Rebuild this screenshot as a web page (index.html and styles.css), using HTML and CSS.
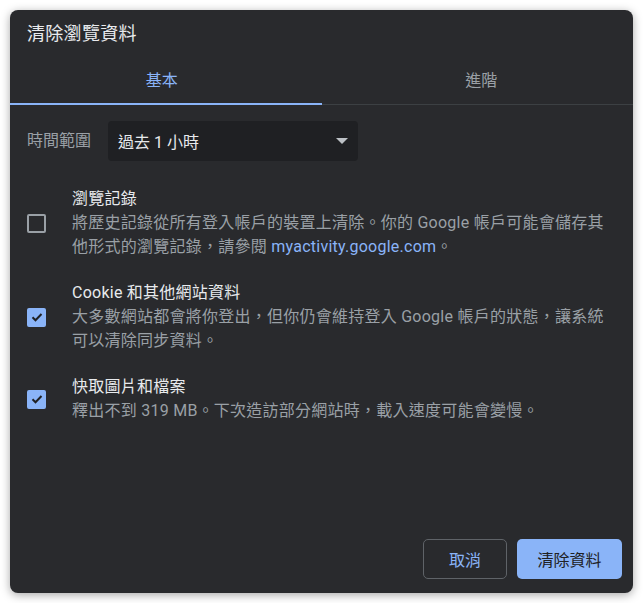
FILE: index.html
```html
<!DOCTYPE html>
<html lang="zh-Hant">
<head>
<meta charset="utf-8">
<title>清除瀏覽資料</title>
<link rel="stylesheet" href="styles.css">
</head>
<body>
<div class="dialog">
  <div class="title">清除瀏覽資料</div>
  <div class="tabs">
    <div class="tab active">基本</div>
    <div class="tab">進階</div>
  </div>
  <div class="content">
    <div class="range-row">
      <span class="range-label">時間範圍</span>
      <div class="select">
        <span>過去 1 小時</span>
        <svg class="arrow" width="12" height="6" viewBox="0 0 12 6"><path d="M0 0h12L6 6z" fill="#bdc1c6"/></svg>
      </div>
    </div>
    <div class="items">
      <div class="item">
        <div class="box-col"><span class="checkbox"></span></div>
        <div class="text">
          <div class="item-title">瀏覽記錄</div>
          <div class="item-desc">將歷史記錄從所有登入帳戶的裝置上清除。你的 Google 帳戶可能會儲存其他形式的瀏覽記錄，請參閱 <span class="link">myactivity.google.com</span>。</div>
        </div>
      </div>
      <div class="item">
        <div class="box-col"><span class="checkbox checked"><svg width="14" height="14" viewBox="0 0 14 14"><path d="M2.5 7.2l3 3 6-6.2" fill="none" stroke="#202124" stroke-width="2"/></svg></span></div>
        <div class="text">
          <div class="item-title">Cookie 和其他網站資料</div>
          <div class="item-desc">大多數網站都會將你登出，但你仍會維持登入 Google 帳戶的狀態，讓系統可以清除同步資料。</div>
        </div>
      </div>
      <div class="item">
        <div class="box-col"><span class="checkbox checked"><svg width="14" height="14" viewBox="0 0 14 14"><path d="M2.5 7.2l3 3 6-6.2" fill="none" stroke="#202124" stroke-width="2"/></svg></span></div>
        <div class="text">
          <div class="item-title">快取圖片和檔案</div>
          <div class="item-desc">釋出不到 319 MB。下次造訪部分網站時，載入速度可能會變慢。</div>
        </div>
      </div>
    </div>
  </div>
  <div class="actions">
    <button class="btn cancel">取消</button>
    <button class="btn primary">清除資料</button>
  </div>
</div>
</body>
</html>
```

FILE: styles.css
```css
* { box-sizing: border-box; }
html, body { margin: 0; background: #ffffff; }
body {
  padding: 10px;
  font-family: Roboto, "Noto Sans CJK TC", sans-serif;
  font-size: 16px;
}
.dialog {
  width: 623px;
  height: 583px;
  background: #292a2d;
  border-radius: 8px;
  box-shadow: 0 2px 10px rgba(0,0,0,0.35);
  display: flex;
  flex-direction: column;
  color: #e8eaed;
}
.title {
  padding: 12px 17px 10px;
  font-size: 18px;
  line-height: 24px;
  letter-spacing: 0.3px;
  color: #e8eaed;
}
.tabs {
  display: flex;
  box-shadow: inset 0 -1px 0 #3c4043;
}
.tab {
  flex: 1;
  height: 49px;
  display: flex;
  align-items: center;
  justify-content: center;
  padding-bottom: 2px;
  color: #9aa0a6;
  font-size: 16px;
  border-bottom: 2px solid transparent;
}
.tab.active {
  color: #8ab4f8;
  border-bottom-color: #8ab4f8;
  padding-right: 8px;
}
.tab + .tab { padding-left: 8px; }
.content {
  padding: 16px 17px 0;
}
.range-row {
  display: flex;
  align-items: center;
  gap: 17px;
}
.range-label {
  color: #9aa0a6;
  line-height: 24px;
}
.select {
  width: 250px;
  height: 40px;
  background: #1f2023;
  border-radius: 4px;
  display: flex;
  align-items: center;
  justify-content: space-between;
  padding: 0 10px 0 10px;
  color: #e8eaed;
}
.items {
  margin-top: 26px;
  display: flex;
  flex-direction: column;
  gap: 22px;
}
.item {
  display: flex;
  align-items: center;
}
.box-col {
  width: 45px;
  flex: none;
  display: flex;
  align-items: center;
}
.checkbox {
  width: 19px;
  height: 19px;
  border: 2px solid #9aa0a6;
  border-radius: 2px;
  display: flex;
  align-items: center;
  justify-content: center;
}
.checkbox.checked {
  background: #8ab4f8;
  border-color: #8ab4f8;
}
.text {
  line-height: 24px;
  max-width: 536px;
  letter-spacing: 0.25px;
}
.item-title {
  color: #e8eaed;
}
.item-desc {
  color: #9aa0a6;
}
.link { color: #8ab4f8; }
.actions {
  margin-top: auto;
  display: flex;
  justify-content: flex-end;
  gap: 10px;
  padding: 0 11px 14px 0;
}
.btn {
  height: 40px;
  border-radius: 5px;
  font-family: Roboto, "Noto Sans CJK TC", sans-serif;
  font-size: 16px;
  padding: 0;
}
.cancel {
  width: 84px;
  background: transparent;
  border: 1px solid #5f6368;
  color: #8ab4f8;
}
.primary {
  width: 105px;
  background: #8ab4f8;
  border: none;
  color: #202124;
}
```
